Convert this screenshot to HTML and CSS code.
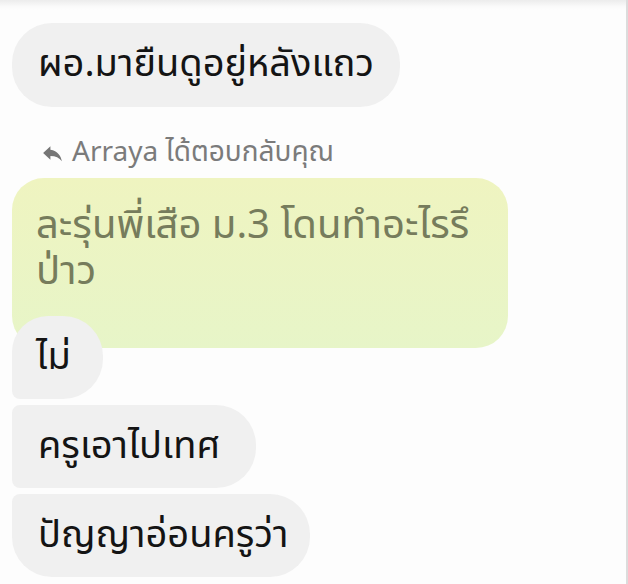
FILE: index.html
```html
<!DOCTYPE html>
<html lang="th">
<head>
<meta charset="utf-8">
<link rel="stylesheet" href="styles.css">
</head>
<body>
<div class="screen">
  <div class="thread">
    <div class="bubble solo">ผอ.มายืนดูอยู่หลังแถว</div>
    <div class="reply-label">
      <svg class="reply-icon" viewBox="0 0 24 24" width="25" height="25"><path d="M10 8.5V5l-7 6.5 7 6.5v-3.6c5 0 8.5 1.6 11 5.1-1-5-4-10-11-11z" fill="#767676"/></svg>
      <span>Arraya ได้ตอบกลับคุณ</span>
    </div>
    <div class="quoted">ละรุ่นพี่เสือ ม.3 โดนทำอะไรรึ<br>ป่าว</div>
    <div class="group">
      <div class="bubble first short">ไม่</div>
      <div class="bubble middle wide">ครูเอาไปเทศ</div>
      <div class="bubble last">ปัญญาอ่อนครูว่า</div>
    </div>
  </div>
</div>
</body>
</html>
```
FILE: styles.css
```css
html, body {
  margin: 0;
  padding: 0;
  background: #fdfdfd;
}
.screen {
  width: 628px;
  height: 584px;
  box-sizing: border-box;
  overflow: hidden;
  border-right: 2px solid #dcdcdc;
  background: linear-gradient(to bottom, #ececec 0px, #fbfbfb 7px, #fdfdfd 10px);
  font-family: "Noto Sans Thai", "Noto Sans", "Open Sans", sans-serif;
}
.thread {
  display: flex;
  flex-direction: column;
  align-items: flex-start;
  padding: 23px 0 0 12px;
}
.bubble {
  background: #f0f0f0;
  color: #141414;
  font-size: 38px;
  line-height: 48px;
  padding: 18px 26px 18px 26px;
  border-radius: 40px;
}
.reply-label {
  display: flex;
  align-items: center;
  gap: 7px;
  margin: 31px 0 0 28px;
  color: #7b7b7b;
  font-size: 28px;
  line-height: 30px;
  height: 30px;
}
.reply-icon {
  display: block;
}
.quoted {
  margin-top: 10px;
  width: 496px;
  box-sizing: border-box;
  padding: 25px 24px 53px 24px;
  border-radius: 32px;
  background: linear-gradient(to bottom, #eff4c0, #e7f5c8);
  color: #767c5c;
  font-size: 40px;
  line-height: 46px;
}
.group {
  display: flex;
  flex-direction: column;
  align-items: flex-start;
  gap: 6px;
  margin-top: -32px;
  position: relative;
}
.group .bubble {
  line-height: 47px;
}
.bubble.first {
  border-radius: 36px 40px 40px 8px;
}
.bubble.middle {
  border-radius: 8px 40px 40px 8px;
}
.bubble.last {
  border-radius: 8px 40px 40px 40px;
  padding-right: 22px;
}
.bubble.short {
  padding-left: 24px;
  padding-right: 32px;
}
.bubble.wide {
  padding-right: 36px;
}
```
